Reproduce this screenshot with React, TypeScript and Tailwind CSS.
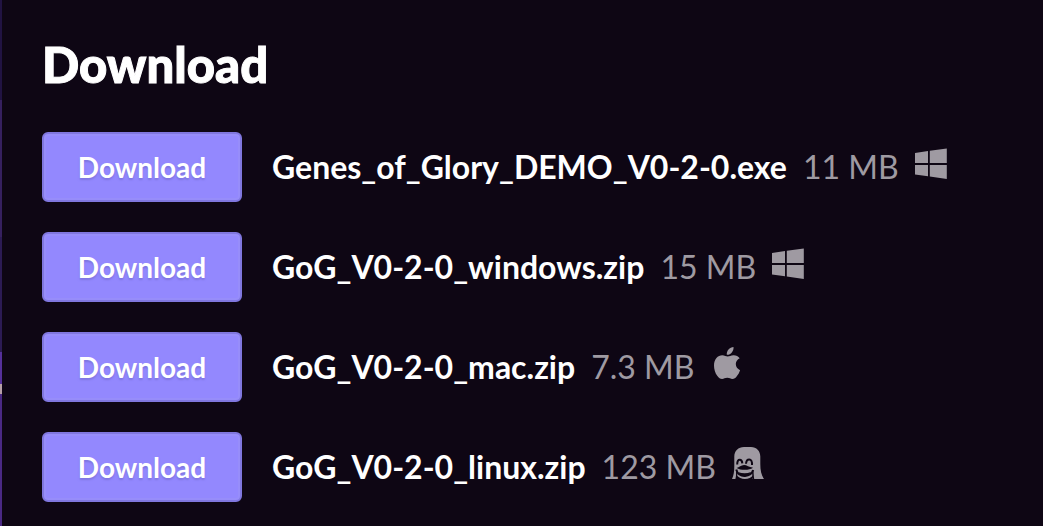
type Platform = "windows" | "apple" | "linux";

type Upload = {
  name: string;
  size: string;
  platform: Platform;
};

const uploads: Upload[] = [
  { name: "Genes_of_Glory_DEMO_V0-2-0.exe", size: "11 MB", platform: "windows" },
  { name: "GoG_V0-2-0_windows.zip", size: "15 MB", platform: "windows" },
  { name: "GoG_V0-2-0_mac.zip", size: "7.3 MB", platform: "apple" },
  { name: "GoG_V0-2-0_linux.zip", size: "123 MB", platform: "linux" },
];

function PlatformIcon({ platform }: { platform: Platform }) {
  if (platform === "windows") {
    return (
      <svg viewBox="0 0 32 32" className="h-8 w-8 fill-current" role="img" aria-label="Windows">
        <path d="M0 6 13 4V16H0zM14.800 3.800 31.800 1.600V16h-17zM0 18h13v11.200L0 27.600zM14.800 18h17v14l-17-2.400z" />
      </svg>
    );
  }
  if (platform === "apple") {
    return (
      <svg viewBox="0 0 32 32" className="h-8 w-8 fill-current" role="img" aria-label="macOS">
        <path d="M23.5 0c.3 2-.5 4-1.700 5.400-1.200 1.500-3.100 2.600-5 2.400-.3-1.900.6-3.900 1.700-5.200C19.700 1.200 21.800.1 23.500 0zM29.700 11.300c-2.400 1.300-3.900 3.300-3.900 5.800 0 2.800 1.700 5 4.300 6.100-.7 2.200-1.800 4.300-3.300 6.100-1.300 1.700-2.500 2.700-4.400 2.700-2 0-2.600-1.200-5.100-1.200s-3.300 1.200-5.200 1.200c-1.900 0-3.300-1.200-4.700-3C5.100 26.200 4 22.400 4 18.600c0-6.200 3.800-10.300 8.300-10.300 2.200 0 3.800 1.300 5.400 1.300 1.500 0 3.500-1.400 6-1.300 2.500.1 4.600 1.100 6 3z" />
      </svg>
    );
  }
  return (
    <svg viewBox="0 0 32 32" className="h-8 w-8" role="img" aria-label="Linux">
      <path
        className="fill-current"
        d="M12 0h7c5.500 0 9.300 3.900 9.300 9.500v7.500c0 6 .9 11 3.700 15H20.500c.5-1.500.7-2.600.6-4-1.700 2.400-4.500 4-8.300 4-3.400 0-5.900-1.200-7.600-3.200L4.600 32H0c1.700-3.300 2.300-7.500 2.300-13V9.500C2.300 3.900 6.300 0 12 0z"
      />
      <g className="fill-none stroke-[#0e0614] stroke-2">
        <path d="M5.200 17.500c0-3.200.9-4.800 2.500-4.800s2.500 1.200 2.600 3.700M14 16.700c.2-2.700 1.400-4.300 3.200-4.300 2 0 3 2 2.800 5.600" />
        <path d="M4.300 22.500c.9 3.900 4.400 6.400 8.600 6.400 3.900 0 7.200-2.200 8.200-5.800" />
      </g>
      <g className="fill-[#0e0614]">
        <path d="M4.600 20.900c2.600-.4 4.600-2.900 7.400-2.900s4.900 2.200 9 2.700c-2.200 1.500-4.900 2.100-8.200 2.100-3.200 0-6.300-.6-8.200-1.900z" />
        <path d="M3.800 22.800 5.500 26 5 32H3.400c.8-3 .9-6.100.4-9.200zM21.400 22.800c.3 3.100.2 5.400.8 9.200h-1.500l-.6-6z" />
        <path d="M6.500 25.200c1.900.7 4 1 6.200 1 2.100 0 4.300-.4 6.300-1.200-1.400 2.800-3.800 4.400-6.300 4.400-2.400 0-4.900-1.300-6.200-4.200z" />
      </g>
    </svg>
  );
}

function UploadRow({ upload }: { upload: Upload }) {
  return (
    <li className="flex items-center gap-[30px]">
      <button
        type="button"
        aria-label={`Download ${upload.name}`}
        className="h-[70px] w-[200px] shrink-0 rounded-md border-2 border-[#8077df] bg-[#9388fe] text-[28px] font-bold text-white shadow-[inset_0_0_0_2px_#978dfa] [text-shadow:0_2px_2px_#7f75e0]"
      >
        Download
      </button>
      <div className="flex items-center gap-4 whitespace-nowrap text-[32px] leading-10">
        <strong className="font-bold text-white">{upload.name}</strong>
        <span className="text-[#9f9aa2]">{upload.size}</span>
        <span className="pb-2 text-[#9f9aa2]">
          <PlatformIcon platform={upload.platform} />
        </span>
      </div>
    </li>
  );
}

export default function App() {
  return (
    <div className="flex min-h-screen bg-[#0e0614] font-['Lato',sans-serif]">
      <div
        aria-hidden="true"
        className="w-0.5 shrink-0 bg-[linear-gradient(to_bottom,#211342_0_19%,#36205f_19%_45%,#2c1b54_45%_67%,#55309a_67%_73%,#b7a0a8_73%_75%,#4a2984_75%_100%)]"
      />
      <main className="flex-1 px-10 pt-[34px] pb-6">
        <h2 className="mb-[38px] text-[49px] leading-[60px] font-black text-white [-webkit-text-stroke:1px_white]">
          Download
        </h2>
        <ul className="flex flex-col gap-[30px]">
          {uploads.map((upload) => (
            <UploadRow key={upload.name} upload={upload} />
          ))}
        </ul>
      </main>
    </div>
  );
}
